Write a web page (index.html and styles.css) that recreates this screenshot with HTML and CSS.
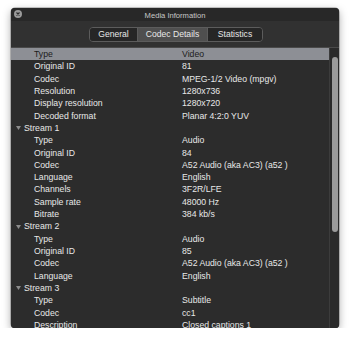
FILE: index.html
```html
<!DOCTYPE html>
<html>
<head>
<meta charset="utf-8">
<link rel="stylesheet" href="styles.css">
</head>
<body>
<div class="window">
  <div class="titlebar">
    <span class="close"><svg width="8" height="8" viewBox="0 0 8 8"><circle cx="4" cy="4" r="4" fill="#9a9a9a"/><path d="M2.5 2.5L5.5 5.5M5.5 2.5L2.5 5.5" stroke="#2a2a2a" stroke-width="1.1"/></svg></span>
    <span class="title">Media Information</span>
  </div>
  <div class="toolbar">
    <div class="segmented">
      <span class="seg seg-general">General</span>
      <span class="seg seg-codec active">Codec Details</span>
      <span class="seg seg-stats">Statistics</span>
    </div>
  </div>
  <div class="content">
    <div class="table">
      <div class="row selected child"><span class="label">Type</span><span class="value">Video</span></div>
      <div class="row child"><span class="label">Original ID</span><span class="value">81</span></div>
      <div class="row child"><span class="label">Codec</span><span class="value">MPEG-1/2 Video (mpgv)</span></div>
      <div class="row child"><span class="label">Resolution</span><span class="value">1280x736</span></div>
      <div class="row child"><span class="label">Display resolution</span><span class="value">1280x720</span></div>
      <div class="row child"><span class="label">Decoded format</span><span class="value">Planar 4:2:0 YUV</span></div>
      <div class="row group"><span class="label"><svg class="tri" width="5" height="4" viewBox="0 0 5 4"><path d="M0 0H5L2.5 4Z" fill="#8a8a8a"/></svg>Stream 1</span><span class="value"></span></div>
      <div class="row child"><span class="label">Type</span><span class="value">Audio</span></div>
      <div class="row child"><span class="label">Original ID</span><span class="value">84</span></div>
      <div class="row child"><span class="label">Codec</span><span class="value">A52 Audio (aka AC3) (a52 )</span></div>
      <div class="row child"><span class="label">Language</span><span class="value">English</span></div>
      <div class="row child"><span class="label">Channels</span><span class="value">3F2R/LFE</span></div>
      <div class="row child"><span class="label">Sample rate</span><span class="value">48000 Hz</span></div>
      <div class="row child"><span class="label">Bitrate</span><span class="value">384 kb/s</span></div>
      <div class="row group"><span class="label"><svg class="tri" width="5" height="4" viewBox="0 0 5 4"><path d="M0 0H5L2.5 4Z" fill="#8a8a8a"/></svg>Stream 2</span><span class="value"></span></div>
      <div class="row child"><span class="label">Type</span><span class="value">Audio</span></div>
      <div class="row child"><span class="label">Original ID</span><span class="value">85</span></div>
      <div class="row child"><span class="label">Codec</span><span class="value">A52 Audio (aka AC3) (a52 )</span></div>
      <div class="row child"><span class="label">Language</span><span class="value">English</span></div>
      <div class="row group"><span class="label"><svg class="tri" width="5" height="4" viewBox="0 0 5 4"><path d="M0 0H5L2.5 4Z" fill="#8a8a8a"/></svg>Stream 3</span><span class="value"></span></div>
      <div class="row child"><span class="label">Type</span><span class="value">Subtitle</span></div>
      <div class="row child"><span class="label">Codec</span><span class="value">cc1</span></div>
      <div class="row child"><span class="label">Description</span><span class="value">Closed captions 1</span></div>
    </div>
    <div class="scrollbar"><div class="thumb"></div></div>
  </div>
</div>
</body>
</html>
```
FILE: styles.css
```css
html, body {
  margin: 0;
  padding: 0;
  background: #ffffff;
}
body {
  padding: 8px 11px 0 11px;
  font-family: "Liberation Sans", Arial, sans-serif;
}
.window {
  width: 328px;
  height: 320px;
  border-radius: 4px;
  overflow: hidden;
  background: #2c2c2c;
  box-shadow: 0 3px 9px rgba(0, 0, 0, 0.35), 0 0 0 0.5px rgba(0, 0, 0, 0.4);
  display: flex;
  flex-direction: column;
}
.titlebar {
  height: 13px;
  flex: none;
  background: #282828;
  display: flex;
  align-items: center;
  justify-content: center;
  position: relative;
}
.close {
  position: absolute;
  left: 3px;
  top: 2px;
  width: 8px;
  height: 8px;
  display: flex;
}
.title {
  font-size: 7.6px;
  color: #c8c8c8;
  padding-top: 1px;
}
.toolbar {
  flex: none;
  background: #313131;
  border-bottom: 1px solid #4a4a4a;
  display: flex;
  align-items: center;
  justify-content: center;
  box-sizing: border-box;
  height: 27px;
}
.segmented {
  display: flex;
  height: 15px;
  border: 1px solid #5c5c5c;
  border-radius: 4px;
  overflow: hidden;
  box-sizing: border-box;
  margin-left: 2px;
}
.seg {
  display: flex;
  align-items: center;
  justify-content: center;
  font-size: 8.6px;
  color: #e6e6e6;
  background: #262626;
  height: 100%;
}
.seg + .seg {
  border-left: 1px solid #5c5c5c;
}
.seg-general { width: 47px; }
.seg-codec { width: 69px; }
.seg-stats { width: 54px; }
.seg.active {
  background: #4f4f4f;
  color: #e8e8e8;
}
.content {
  flex: 1;
  display: flex;
  overflow: hidden;
  background: #2c2c2c;
}
.table {
  flex: 1;
  overflow: hidden;
}
.row {
  display: flex;
  height: 12.32px;
  line-height: 12.32px;
  font-size: 8.7px;
  color: #e8e8e8;
  white-space: nowrap;
}
.row.selected {
  background: #8d8f95;
  color: #1c1c1c;
}
.label {
  width: 171px;
  flex: none;
  box-sizing: border-box;
  display: flex;
  align-items: center;
}
.child .label {
  padding-left: 23px;
}
.group .label {
  padding-left: 5px;
}
.tri {
  margin-right: 3px;
}
.scrollbar {
  width: 10px;
  flex: none;
  background: #2a2a2a;
  border-left: 1px solid #3c3c3c;
  box-sizing: border-box;
  padding: 9px 2px 0 2px;
}
.thumb {
  width: 6px;
  height: 175px;
  border-radius: 3px;
  background: #9b9b9b;
}
```
